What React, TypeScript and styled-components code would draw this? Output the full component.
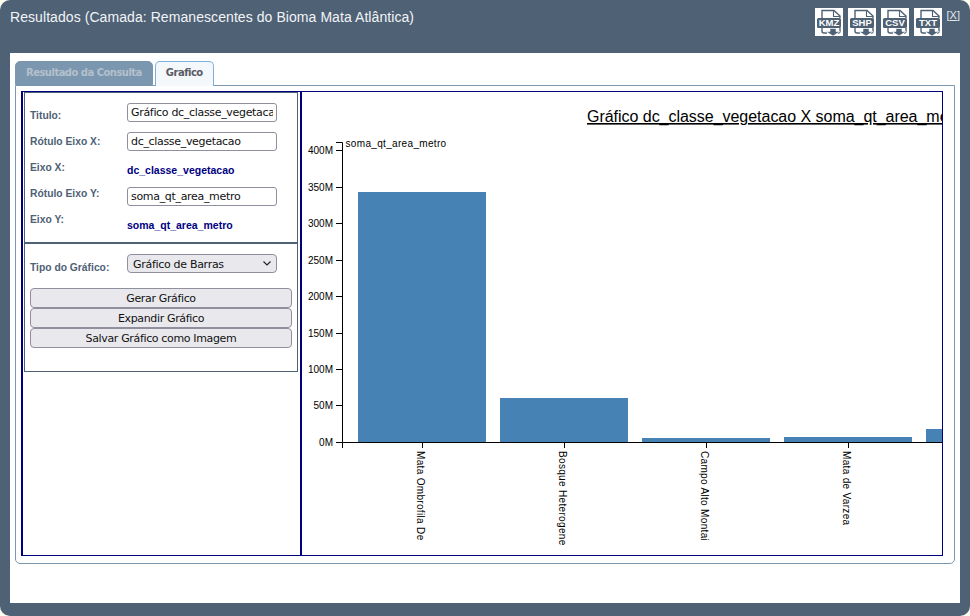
import styled, { createGlobalStyle } from "styled-components";

const GlobalStyle = createGlobalStyle`
  html, body {
    margin: 0;
    padding: 0;
    background: #fdfdf0;
  }
`;

const chevron =
  "data:image/svg+xml,%3Csvg xmlns='http://www.w3.org/2000/svg' width='8' height='5'%3E%3Cpath d='M.5 .5L4 4L7.5 .5' fill='none' stroke='%23222' stroke-width='1.1'/%3E%3C/svg%3E";

const ticks = [
  { y: 442, label: "0M" },
  { y: 405.5, label: "50M" },
  { y: 369, label: "100M" },
  { y: 333, label: "150M" },
  { y: 296.5, label: "200M" },
  { y: 260, label: "250M" },
  { y: 223.5, label: "300M" },
  { y: 187, label: "350M" },
  { y: 150.5, label: "400M" },
];

const bars = [
  { x: 358, top: 192, tick: 422, label: "Mata Ombrofila De" },
  { x: 500, top: 398, tick: 564, label: "Bosque Heterogene" },
  { x: 642, top: 438, tick: 706, label: "Campo Alto Montai" },
  { x: 784, top: 437, tick: 848, label: "Mata de Varzea" },
  { x: 926, top: 429, tick: 990, label: "" },
];

function ExportIcon({ label }: { label: string }) {
  return (
    <IconBox title={label}>
      <svg width="28" height="28" viewBox="0 0 28 28">
        <rect width="28" height="28" fill="#fff" />
        <path
          d="M7 10V2.5h12L25 8v2M7 20v3q0 2 2 2H12M25 20v3q0 2-2 2"
          fill="none"
          stroke="#4e6175"
          strokeWidth="1.4"
        />
        <path d="M18.5 3V8.5H25" fill="none" stroke="#4e6175" strokeWidth="1.1" />
        <rect x="2" y="10" width="24" height="10" rx="1.5" fill="#4e6175" />
        <text
          x="14"
          y="18.4"
          textAnchor="middle"
          fontFamily="'Liberation Sans', sans-serif"
          fontWeight="700"
          fontSize="9.5"
          fill="#fff"
        >
          {label}
        </text>
        <path d="M15 20.500h6v3h4L18 28 11 23.500h4z" fill="#4e6175" stroke="#fff" strokeWidth="0.6" />
      </svg>
    </IconBox>
  );
}

function BarChart() {
  return (
    <svg width="640" height="463" viewBox="302 92 640 463">
      <text
        x="587"
        y="122"
        fontFamily="'Liberation Sans', sans-serif"
        fontSize="16"
        letterSpacing="-0.03"
        textDecoration="underline"
        fill="#000"
      >
        Gráfico dc_classe_vegetacao X soma_qt_area_metro
      </text>
      <text
        x="345.500"
        y="146.500"
        fontFamily="'Liberation Sans', sans-serif"
        fontSize="10"
        letterSpacing="0.33"
        fill="#000"
      >
        soma_qt_area_metro
      </text>
      {bars.map((b) => (
        <rect key={b.x} x={b.x} y={b.top} width="128" height={442 - b.top} fill="#4682b4" />
      ))}
      <path d="M336 142.5H342.5V442.5" fill="none" stroke="#000" />
      <path d="M342.5 448V442.5H942" fill="none" stroke="#000" />
      {ticks.map((t) => (
        <g key={t.label}>
          <line x1="336" x2="342" y1={Math.floor(t.y) + 0.5} y2={Math.floor(t.y) + 0.5} stroke="#000" />
          <text
            x="333"
            y={t.y + 3.5}
            textAnchor="end"
            fontFamily="'Liberation Sans', sans-serif"
            fontSize="10"
            fill="#000"
          >
            {t.label}
          </text>
        </g>
      ))}
      {bars.map((b) => (
        <g key={b.tick}>
          <line x1={b.tick + 0.5} x2={b.tick + 0.5} y1="442" y2="448" stroke="#000" />
          <text
            transform={`translate(${b.tick - 5.5} 451) rotate(90)`}
            fontFamily="'Liberation Sans', sans-serif"
            fontSize="10"
            letterSpacing="0.33"
            fill="#000"
          >
            {b.label}
          </text>
        </g>
      ))}
    </svg>
  );
}

export default function App() {
  return (
    <>
      <GlobalStyle />
      <Window>
        <Header>
          <Title>Resultados (Camada: Remanescentes do Bioma Mata Atlântica)</Title>
          <HeaderTools>
            <ExportIcon label="KMZ" />
            <ExportIcon label="SHP" />
            <ExportIcon label="CSV" />
            <ExportIcon label="TXT" />
            <CloseLink>
              [<u>X</u>]
            </CloseLink>
          </HeaderTools>
        </Header>
        <Content>
          <TabList>
            <Tab>Resultado da Consulta</Tab>
            <Tab $active>Grafico</Tab>
          </TabList>
          <TabPanel>
            <Split>
              <FormColumn>
                <FormBox>
                  <AxisSection>
                    <Row $height={29}>
                      <Label $top={7}>Titulo:</Label>
                      <TextInput defaultValue="Gráfico dc_classe_vegetacao X soma_qt_area_metro" />
                    </Row>
                    <Row $height={29}>
                      <Label $top={4}>Rótulo Eixo X:</Label>
                      <TextInput defaultValue="dc_classe_vegetacao" />
                    </Row>
                    <Row $height={26}>
                      <Label $top={1}>Eixo X:</Label>
                      <Value $top={3}>dc_classe_vegetacao</Value>
                    </Row>
                    <Row $height={26}>
                      <Label $top={1}>Rótulo Eixo Y:</Label>
                      <TextInput defaultValue="soma_qt_area_metro" />
                    </Row>
                    <Row $height={26}>
                      <Label $top={1}>Eixo Y:</Label>
                      <Value $top={6}>soma_qt_area_metro</Value>
                    </Row>
                  </AxisSection>
                  <TypeSection>
                    <Row $height={34}>
                      <Label $top={8}>Tipo do Gráfico:</Label>
                      <TypeSelect defaultValue="barras">
                        <option value="barras">Gráfico de Barras</option>
                      </TypeSelect>
                    </Row>
                    <ActionButton>Gerar Gráfico</ActionButton>
                    <ActionButton>Expandir Gráfico</ActionButton>
                    <ActionButton>Salvar Gráfico como Imagem</ActionButton>
                  </TypeSection>
                </FormBox>
              </FormColumn>
              <ChartColumn>
                <BarChart />
              </ChartColumn>
            </Split>
          </TabPanel>
        </Content>
      </Window>
    </>
  );
}

const Window = styled.div`
  width: 970px;
  height: 616px;
  box-sizing: border-box;
  background: #4e6175;
  border-radius: 10px;
  padding: 0 10px 13px;
  display: flex;
  flex-direction: column;
  overflow: hidden;
`;

const Header = styled.div`
  height: 53px;
  flex: none;
  display: flex;
  justify-content: space-between;
  align-items: flex-start;
`;

const Title = styled.div`
  font-family: "Liberation Sans", sans-serif;
  font-size: 14px;
  letter-spacing: 0.07px;
  color: #f2f4f6;
  line-height: 16px;
  margin-top: 9px;
`;

const HeaderTools = styled.div`
  display: flex;
  gap: 5px;
  margin-top: 8px;
`;

const IconBox = styled.div`
  width: 28px;
  height: 28px;
  svg {
    display: block;
  }
`;

const CloseLink = styled.span`
  font-family: "Liberation Sans", sans-serif;
  font-size: 11px;
  line-height: 13px;
  color: #e4e8ec;
  margin-top: 1px;
`;

const Content = styled.div`
  flex: 1;
  background: #fff;
  padding: 8px 5px 0;
`;

const TabList = styled.div`
  display: flex;
  gap: 2px;
  height: 24px;
  position: relative;
  z-index: 1;
`;

const Tab = styled.div<{ $active?: boolean }>`
  font-family: "DejaVu Sans", sans-serif;
  font-weight: 700;
  font-size: 10px;
  letter-spacing: -0.52px;
  padding: 0 10px;
  height: ${(p) => (p.$active ? "25px" : "24px")};
  box-sizing: border-box;
  line-height: 22px;
  border-radius: 5px 5px 0 0;
  color: ${(p) => (p.$active ? "#5a5a66" : "#b4c0cc")};
  background: ${(p) => (p.$active ? "#f5f8fa" : "#7b97b0")};
  border: 1px solid ${(p) => (p.$active ? "#7fb0dc" : "#7b97b0")};
  border-bottom: ${(p) => (p.$active ? "none" : "1px solid #7b97b0")};
`;

const TabPanel = styled.div`
  height: 479px;
  box-sizing: border-box;
  border: 1px solid #7b97b0;
  border-radius: 0 0 5px 5px;
  padding: 5px 11px 7px 5px;
`;

const Split = styled.div`
  height: 100%;
  box-sizing: border-box;
  display: flex;
  border: 1px solid #00007f;
  border-left-width: 2px;
`;

const FormColumn = styled.div`
  width: 279px;
  flex: none;
  box-sizing: border-box;
  border-right: 2px solid #00007f;
`;

const FormBox = styled.div`
  margin: 0 0 0 1px;
  width: 274px;
  height: 280px;
  box-sizing: border-box;
  border: 1px solid #4e6175;
`;

const AxisSection = styled.div`
  height: 149px;
  box-sizing: border-box;
  padding: 10px 0 0 5px;
`;

const TypeSection = styled.div`
  border-top: 2px solid #4e6175;
  padding: 10px 0 0 5px;
`;

const Row = styled.div<{ $height: number }>`
  display: flex;
  align-items: flex-start;
  height: ${(p) => p.$height}px;
`;

const Label = styled.div<{ $top: number }>`
  width: 97px;
  flex: none;
  padding-top: ${(p) => p.$top}px;
  font-family: "Liberation Sans", sans-serif;
  font-size: 10.3px;
  font-weight: 700;
  line-height: 12px;
  color: #4e6175;
`;

const Value = styled.div<{ $top: number }>`
  padding-top: ${(p) => p.$top}px;
  font-family: "Liberation Sans", sans-serif;
  font-size: 10.5px;
  font-weight: 700;
  line-height: 12px;
  color: #00007f;
`;

const TextInput = styled.input`
  width: 150px;
  height: 19px;
  box-sizing: border-box;
  border: 1px solid #8f8f9d;
  border-radius: 3px;
  padding: 0 3px;
  margin: 0;
  font-family: "DejaVu Sans", sans-serif;
  font-size: 11px;
  letter-spacing: -0.32px;
  color: #111;
  background: #fff;
`;

const TypeSelect = styled.select`
  appearance: none;
  width: 150px;
  height: 19px;
  box-sizing: border-box;
  border: 1px solid #8f8f9d;
  border-radius: 4px;
  padding: 1px 0 0 5px;
  margin: 0;
  font-family: "DejaVu Sans", sans-serif;
  font-size: 11px;
  letter-spacing: -0.3px;
  color: #111;
  background: #e9e9ed url("${chevron}") no-repeat 135px 6px;
`;

const ActionButton = styled.button`
  display: block;
  width: 262px;
  height: 20px;
  box-sizing: border-box;
  border: 1px solid #8f8f9d;
  border-radius: 4px;
  padding: 0;
  margin: 0;
  font-family: "DejaVu Sans", sans-serif;
  font-size: 11px;
  letter-spacing: -0.35px;
  color: #111;
  background: #e9e9ed;
`;

const ChartColumn = styled.div`
  flex: 1;
  overflow: hidden;
  svg {
    display: block;
  }
`;
